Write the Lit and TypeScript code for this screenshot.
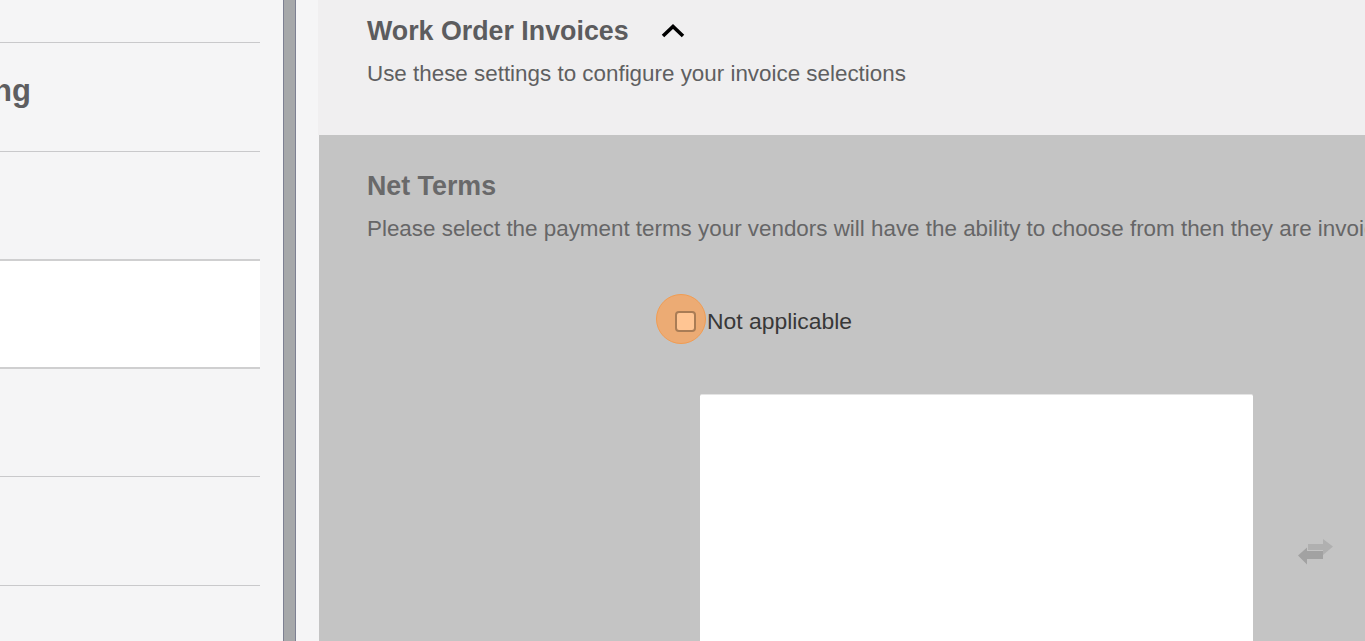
import { LitElement, html, css } from "lit";
import { customElement } from "lit/decorators.js";

@customElement("app-root")
export class AppRoot extends LitElement {
  static styles = css`
    :host { display: block; font-family: "Liberation Sans", Arial, sans-serif; }
    .page { display: flex; width: 1365px; height: 641px; overflow: hidden; background: #f5f5f6; }
    .side { width: 283px; flex: none; overflow: hidden; display: flex; flex-direction: column; }
    .row { width: 260px; flex: none; height: 109px; box-sizing: border-box; border-bottom: 1px solid #c9c9cb; display: flex; align-items: center; }
    .row.first { height: 43px; }
    .row.short { height: 108px; }
    .row.active { background: #fff; border-top: 2px solid #cfcfd0; border-bottom: 2px solid #cfcfd0; margin-top: -2px; height: 110px; }
    .side-title { font-size: 31px; font-weight: 700; color: #5e5e60; margin-left: -7px; margin-top: -12px; }
    .rule { width: 13px; flex: none; box-sizing: border-box; background: #a6a8aa; border-left: 1px solid #7d8092; border-right: 1px solid #7d8092; }
    .main { flex: 1; min-width: 0; padding-left: 22px; display: flex; flex-direction: column; overflow: hidden; }
    .head { height: 135px; flex: none; box-sizing: border-box; background: #f0eff0; padding: 15px 0 0 49px; }
    .head-line { display: flex; align-items: center; gap: 32px; height: 33px; }
    h2 { margin: 0; font-size: 26.8px; line-height: 33px; font-weight: 700; color: #5c5c5e; white-space: nowrap; }
    .chev { width: 24px; height: 15px; display: block; position: relative; top: -1px; }
    p { margin: 0; font-size: 22.4px; line-height: 28px; white-space: nowrap; }
    .head p { margin-top: 12px; color: #5f5f61; }
    .net { flex: 1; margin-left: 1px; background: #c4c4c4; padding: 35px 0 0 48px; position: relative; overflow: hidden; }
    .net h2 { color: #69696a; }
    .net p { margin-top: 12px; color: #666667; }
    .check-line { display: flex; align-items: center; margin: 64px 0 0 308px; height: 28px; position: relative; }
    .box { width: 21px; height: 21px; box-sizing: border-box; flex: none; background: #ffc593; border: 2px solid #a97c55; border-radius: 4px; margin-right: 11px; position: relative; z-index: 1; }
    .halo { position: absolute; left: -19px; top: -13px; width: 50px; height: 50px; box-sizing: border-box; border-radius: 50%; background: #ecab74; border: 1.5px solid #f19c52; }
    .label { font-size: 22.9px; color: #383838; white-space: nowrap; }
    .lists { display: flex; align-items: flex-start; margin: 59px 0 0 333px; }
    .list { width: 553px; height: 260px; background: #fff; flex: none; box-sizing: border-box; border-top: 1px solid #e4e4e4; border-radius: 2px 2px 0 0; }
    .swap { width: 36px; height: 28px; margin: 145px 0 0 45px; flex: none; filter: blur(0.6px); }
  `;

  render() {
    return html`<div class="page">
      <div class="side">
        <div class="row first"></div>
        <div class="row"><span class="side-title">ng</span></div>
        <div class="row"></div>
        <div class="row active"></div>
        <div class="row short"></div>
        <div class="row"></div>
      </div>
      <div class="rule"></div>
      <div class="main">
        <div class="head">
          <div class="head-line">
            <h2>Work Order Invoices</h2>
            <svg class="chev" viewBox="0 0 24 15"><path d="M2 13 12 3.500l10 9.500" fill="none" stroke="#000" stroke-width="3.600"/></svg>
          </div>
          <p>Use these settings to configure your invoice selections</p>
        </div>
        <div class="net">
          <h2>Net Terms</h2>
          <p>Please select the payment terms your vendors will have the ability to choose from then they are invoicing</p>
          <div class="check-line">
            <span class="halo"></span>
            <span class="box"></span>
            <span class="label">Not applicable</span>
          </div>
          <div class="lists">
            <div class="list"></div>
            <svg class="swap" viewBox="0 0 36 28">
              <path d="M10 5h15V0l10 7.500-10 8.500v-5H10z" fill="#b0b0b0"/>
              <path d="M25 12H9V8.500L0 16.500 9 25.500V20h16z" fill="#a2a2a2"/>
            </svg>
          </div>
        </div>
      </div>
    </div>`;
  }
}
